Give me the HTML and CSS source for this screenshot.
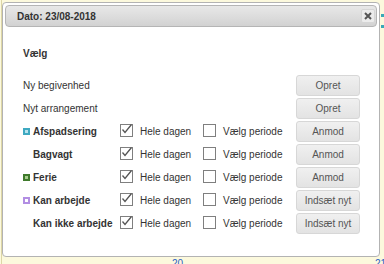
FILE: index.html
```html
<!DOCTYPE html>
<html lang="da">
<head>
    <meta charset="UTF-8">
    <meta name="viewport" content="width=device-width, initial-scale=1.0">
    <title>Dato: 23/08-2018</title>
    <link rel="stylesheet" href="styles.css">
</head>
<body>

    <div class="page">
        <div class="top">
            <!-- Dialog -->
            <div class="dialog">
                <div class="titlebar">
                    <span class="title">Dato: 23/08-2018</span>
                    <button class="close" title="Luk">
                        <svg width="8" height="8" viewBox="0 0 8 8"><path d="M1 1L7 7M7 1L1 7" stroke="#555" stroke-width="2"/></svg>
                    </button>
                </div>

                <div class="content">
                    <div class="heading">Vælg</div>

                    <div class="row">
                        <span class="label plain">Ny begivenhed</span>
                        <button class="btn">Opret</button>
                    </div>
                    <div class="row">
                        <span class="label plain">Nyt arrangement</span>
                        <button class="btn">Opret</button>
                    </div>
                    <div class="row">
                        <span class="icon teal"></span>
                        <span class="label">Afspadsering</span>
                        <label class="check"><span class="box"><svg class="tick" width="13" height="13" viewBox="0 0 13 13"><path d="M2.5 6.5L5 9.5L11.5 1.5" fill="none" stroke="#555" stroke-width="1.3"/></svg></span>Hele dagen</label>
                        <label class="check"><span class="box"></span>Vælg periode</label>
                        <button class="btn">Anmod</button>
                    </div>
                    <div class="row">
                        <span class="label">Bagvagt</span>
                        <label class="check"><span class="box"><svg class="tick" width="13" height="13" viewBox="0 0 13 13"><path d="M2.5 6.5L5 9.5L11.5 1.5" fill="none" stroke="#555" stroke-width="1.3"/></svg></span>Hele dagen</label>
                        <label class="check"><span class="box"></span>Vælg periode</label>
                        <button class="btn">Anmod</button>
                    </div>
                    <div class="row">
                        <span class="icon green"></span>
                        <span class="label">Ferie</span>
                        <label class="check"><span class="box"><svg class="tick" width="13" height="13" viewBox="0 0 13 13"><path d="M2.5 6.5L5 9.5L11.5 1.5" fill="none" stroke="#555" stroke-width="1.3"/></svg></span>Hele dagen</label>
                        <label class="check"><span class="box"></span>Vælg periode</label>
                        <button class="btn">Anmod</button>
                    </div>
                    <div class="row">
                        <span class="icon purple"></span>
                        <span class="label">Kan arbejde</span>
                        <label class="check"><span class="box"><svg class="tick" width="13" height="13" viewBox="0 0 13 13"><path d="M2.5 6.5L5 9.5L11.5 1.5" fill="none" stroke="#555" stroke-width="1.3"/></svg></span>Hele dagen</label>
                        <label class="check"><span class="box"></span>Vælg periode</label>
                        <button class="btn">Indsæt nyt</button>
                    </div>
                    <div class="row">
                        <span class="label">Kan ikke arbejde</span>
                        <label class="check"><span class="box"><svg class="tick" width="13" height="13" viewBox="0 0 13 13"><path d="M2.5 6.5L5 9.5L11.5 1.5" fill="none" stroke="#555" stroke-width="1.3"/></svg></span>Hele dagen</label>
                        <label class="check"><span class="box"></span>Vælg periode</label>
                        <button class="btn">Indsæt nyt</button>
                    </div>
                </div>
            </div>

            <!-- kant af kalenderen bag dialogen -->
            <div class="edge">
                <span class="bar"></span>
                <span class="bar"></span>
            </div>
        </div>

        <div class="daynums">
            <span class="day d20">20</span>
            <span class="day d21">21</span>
        </div>
    </div>

</body>
</html>
```

FILE: styles.css
```css
/* Kalender-baggrund og dialog */
body {
    margin: 0;
    padding: 0;
    background-color: #fcf9dd;
    font-family: "Liberation Sans", Arial, sans-serif;
    font-size: 10px;
    color: #333;
    overflow: hidden;
}

.page {
    height: 264px;
    margin-left: 1px;
    border-left: 1px solid #ddd6a6;
    padding-top: 2px;
    box-sizing: border-box;
    display: flex;
    flex-direction: column;
}

.top {
    display: flex;
}

.dialog {
    width: 378px;
    height: 255px;
    box-sizing: border-box;
    padding: 2px;
    background-color: #fff;
    border: 1px solid #b3b3b3;
    border-radius: 4px;
}

.titlebar {
    height: 22px;
    box-sizing: border-box;
    display: flex;
    align-items: center;
    justify-content: space-between;
    padding: 0 1px 0 11px;
    border: 1px solid #b5b5b5;
    border-radius: 4px;
    background: linear-gradient(#e8e8e8, #d2d2d2);
}

.title {
    font-weight: bold;
    color: #333;
}

.close {
    width: 14px;
    height: 14px;
    padding: 0;
    display: flex;
    align-items: center;
    justify-content: center;
    background-color: #ececec;
    border: 1px solid #d6d6d6;
    border-radius: 2px;
}

.content {
    padding: 21px 18px 0 18px;
}

.heading {
    font-weight: bold;
    line-height: 12px;
    margin-bottom: 14px;
}

.row {
    height: 23px;
    display: grid;
    grid-template-columns: 10px 87px 83px 93px 64px;
    align-items: center;
}

.label {
    grid-column: 2;
    font-weight: bold;
    white-space: nowrap;
}

.label.plain {
    grid-column: 1 / 3;
    font-weight: normal;
}

.icon {
    grid-column: 1;
    width: 7px;
    height: 7px;
    box-sizing: border-box;
    border: 2px solid;
    margin-top: -1px;
}

.teal {
    border-color: #3fa9c1;
    background-color: #b8e3ee;
}

.green {
    border-color: #3f7a2c;
    background-color: #a8cf8f;
}

.purple {
    border-color: #b28ee3;
    background-color: #fff;
}

.check {
    display: flex;
    align-items: center;
    gap: 7px;
    white-space: nowrap;
    color: #333;
}

.check:nth-of-type(1) {
    grid-column: 3;
}

.check:nth-of-type(2) {
    grid-column: 4;
}

.box {
    width: 13px;
    height: 13px;
    box-sizing: border-box;
    border: 1px solid #7f7f7f;
    background-color: #fff;
    margin-top: -3px;
    position: relative;
}

.tick {
    position: absolute;
    left: -1px;
    top: -2px;
}

.btn {
    grid-column: 5;
    height: 21px;
    width: 64px;
    padding: 0;
    font-family: "Liberation Sans", Arial, sans-serif;
    font-size: 10px;
    color: #555;
    background: linear-gradient(#f0f0f0, #e3e3e3);
    border: 1px solid #d7d7d7;
    border-radius: 3px;
}

.edge {
    width: 4px;
    display: flex;
    flex-direction: column;
    gap: 8px;
    padding: 12px 0 0 1px;
}

.bar {
    display: block;
    width: 3px;
    height: 3px;
    background-color: #39a9b8;
}

.daynums {
    position: relative;
    flex: 1;
    color: #2d62c4;
    font-size: 10px;
}

.day {
    position: absolute;
    top: 1px;
}

.d20 {
    left: 170px;
}

.d21 {
    left: 373px;
}
```
